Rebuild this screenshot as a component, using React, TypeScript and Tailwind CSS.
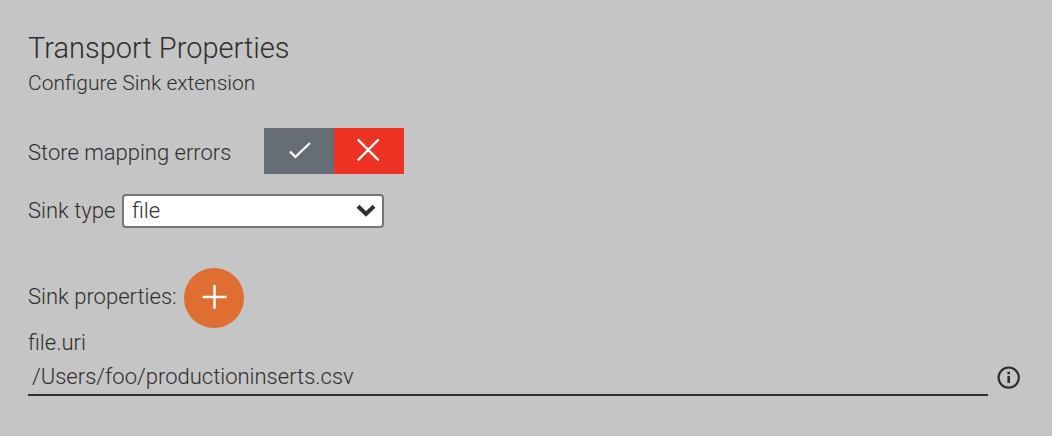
export default function App() {
  return (
    <main className="min-h-screen bg-[#c5c5c5] px-7 pt-8 pb-10 font-['Roboto',sans-serif] text-[22px] font-light leading-8 text-[#2f2f2f]">
      <h1 className="text-[29px] leading-8">Transport Properties</h1>
      <p className="pt-[3px] text-[21px] leading-8">Configure Sink extension</p>

      <div className="mt-[29px] flex items-center" role="group" aria-labelledby="store-errors">
        <span id="store-errors" className="w-[236px] pt-1">Store mapping errors</span>
        <div className="flex">
          <button type="button" aria-label="Yes" aria-pressed="false" className="flex h-[46px] w-[70px] items-center justify-center bg-[#666d75] text-white">
            <svg width="24" height="20" viewBox="0 0 24 20" fill="none" stroke="currentColor" strokeWidth="2.2">
              <path d="M3 10.5l5.4 5.4L23 2" />
            </svg>
          </button>
          <button type="button" aria-label="No" aria-pressed="true" className="flex h-[46px] w-[70px] items-center justify-center bg-[#ee3224] text-white">
            <svg width="26" height="26" viewBox="0 0 26 26" fill="none" stroke="currentColor" strokeWidth="2.2">
              <path d="M1.7 1.4l21 21M22.7 1.4l-21 21" />
            </svg>
          </button>
        </div>
      </div>

      <div className="mt-5 flex items-center">
        <label htmlFor="sink-type" className="w-[94px] whitespace-nowrap">Sink type</label>
        <div className="grid w-[262px] items-center">
          <select
            id="sink-type"
            defaultValue="file"
            className="col-start-1 row-start-1 h-[34px] w-full appearance-none rounded-[4px] border-2 border-[#757575] bg-white px-2 leading-7 outline-none"
          >
            <option value="file">file</option>
          </select>
          <svg className="pointer-events-none col-start-1 row-start-1 mr-2 justify-self-end" width="20" height="14" viewBox="0 0 20 14" fill="none" stroke="currentColor" strokeWidth="4">
            <path d="M2 2.2l8 7.7 8-7.7" />
          </svg>
        </div>
      </div>

      <div className="mt-10 flex items-center">
        <span className="w-[156px] pb-[2px] whitespace-nowrap">Sink properties:</span>
        <button type="button" aria-label="Add sink property" className="flex size-[60px] items-center justify-center rounded-full bg-[#de6e32] text-white">
          <svg width="26" height="26" viewBox="0 0 26 26" fill="none" stroke="currentColor" strokeWidth="2.4">
            <path d="M13.5 0v24M1.5 12h24" />
          </svg>
        </button>
      </div>

      <label htmlFor="file-uri" className="block leading-[30px]">file.uri</label>
      <div className="mr-[3px] flex items-center gap-[9px]">
        <input
          id="file-uri"
          type="text"
          defaultValue="/Users/foo/productioninserts.csv"
          className="h-[38px] min-w-0 flex-1 border-b-2 border-[#2f2f2f] bg-transparent px-1 outline-none"
        />
        <button type="button" aria-label="About file.uri" className="flex size-6 items-center justify-center">
          <svg width="24" height="24" viewBox="0 0 24 24" fill="none" stroke="currentColor" strokeWidth="2.2">
            <circle cx="11.7" cy="12.6" r="10.1" />
            <path d="M11.7 11v7M11.7 6.8v2.4" strokeWidth="2.6" />
          </svg>
        </button>
      </div>
    </main>
  );
}
